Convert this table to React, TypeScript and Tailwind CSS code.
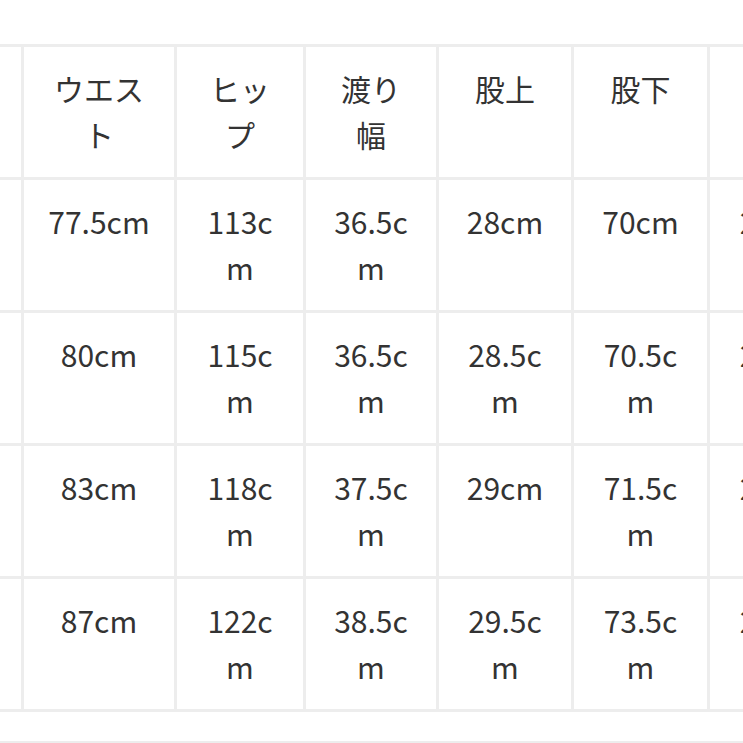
type Cell = string[];

type Column = {
  width: string;
  header: Cell;
};

const columns: Column[] = [
  { width: "w-[24px]", header: [] },
  { width: "w-[153px]", header: ["ウエス", "ト"] },
  { width: "w-[129px]", header: ["ヒッ", "プ"] },
  { width: "w-[133px]", header: ["渡り", "幅"] },
  { width: "w-[135px]", header: ["股上"] },
  { width: "w-[136px]", header: ["股下"] },
  { width: "w-[136px]", header: ["裾幅"] },
];

const rows: Cell[][] = [
  [["M"], ["77.5cm"], ["113c", "m"], ["36.5c", "m"], ["28cm"], ["70cm"], ["21cm"]],
  [["L"], ["80cm"], ["115c", "m"], ["36.5c", "m"], ["28.5c", "m"], ["70.5c", "m"], ["22cm"]],
  [["XL"], ["83cm"], ["118c", "m"], ["37.5c", "m"], ["29cm"], ["71.5c", "m"], ["23cm"]],
  [["XXL"], ["87cm"], ["122c", "m"], ["38.5c", "m"], ["29.5c", "m"], ["73.5c", "m"], ["24cm"]],
];

function TableRow({ cells }: { cells: Cell[] }) {
  return (
    <div className="flex h-[133px] border-b-[3px] border-[#ededed]">
      {columns.map((col, i) => (
        <div
          key={i}
          className={`${col.width} shrink-0 ${
            i === columns.length - 1 ? "" : "border-r-[3px]"
          } border-[#ededed] pt-[18px] text-center`}
        >
          {i === 0
            ? null
            : cells[i].map((line, j) => (
                <div key={j} className="whitespace-nowrap">
                  {line}
                </div>
              ))}
        </div>
      ))}
    </div>
  );
}

export default function App() {
  return (
    <div
      className="h-[743px] w-[743px] overflow-hidden bg-white pt-[44px] text-[30px] leading-[46px] text-[#333333]"
      style={{ fontFamily: '"Noto Sans CJK JP", "Noto Sans", sans-serif' }}
    >
      <div className="w-[1000px]">
        <div className="border-t-[3px] border-[#ededed]">
          <TableRow cells={columns.map((c) => c.header)} />
          {rows.map((r, i) => (
            <TableRow key={i} cells={r} />
          ))}
        </div>
        <div className="mt-[29px] h-[2px] bg-[#ededed]" />
      </div>
    </div>
  );
}
